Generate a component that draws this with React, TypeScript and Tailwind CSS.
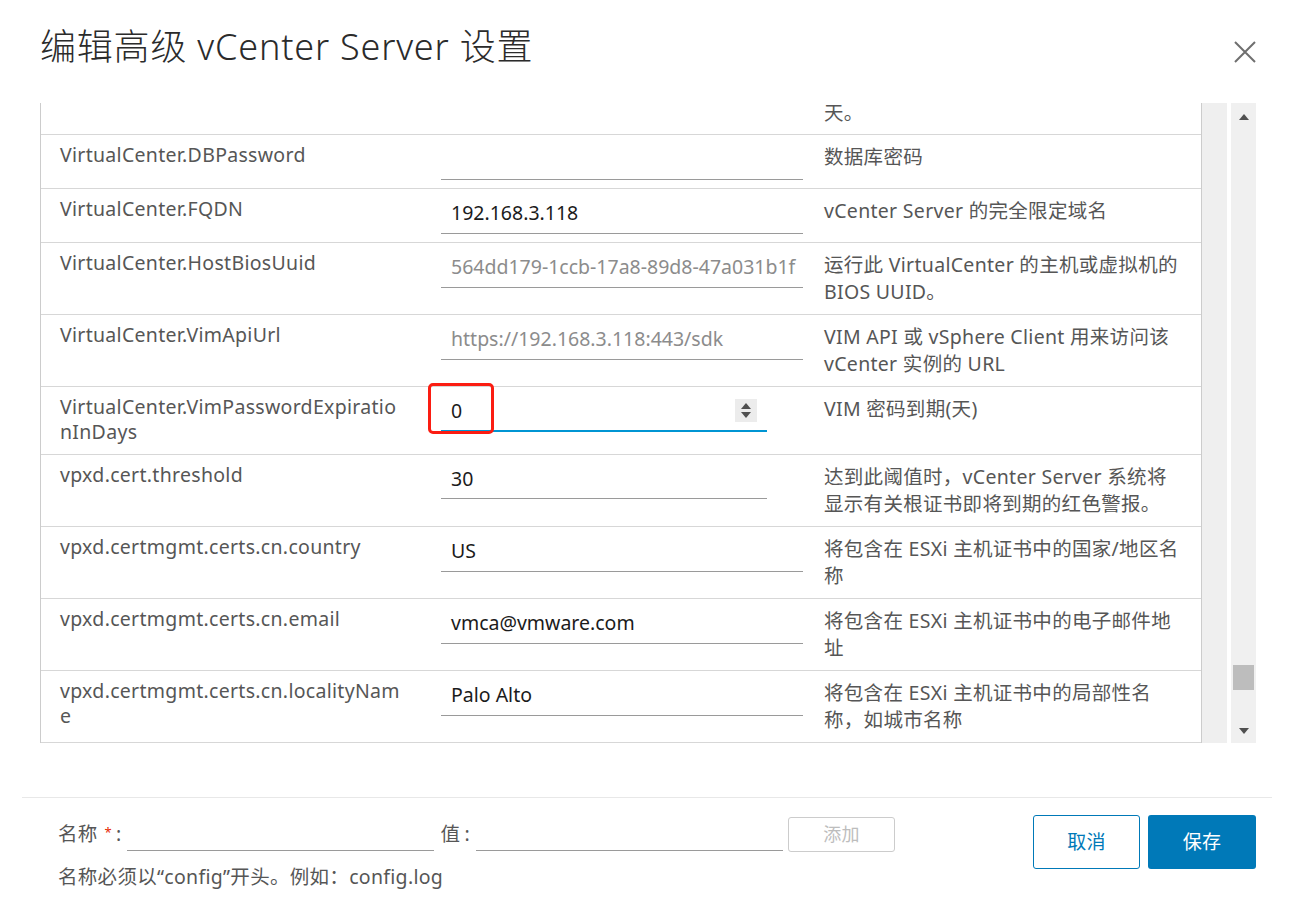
import React from "react";

type Row = {
  h: number;
  name: string[];
  value?: string;
  kind?: "text" | "muted" | "number" | "numberFocus";
  desc: string[];
};

const rows: Row[] = [
  { h: 54, name: ["VirtualCenter.DBPassword"], value: "", kind: "text", desc: ["数据库密码"] },
  { h: 54, name: ["VirtualCenter.FQDN"], value: "192.168.3.118", kind: "text", desc: ["vCenter Server 的完全限定域名"] },
  {
    h: 72,
    name: ["VirtualCenter.HostBiosUuid"],
    value: "564dd179-1ccb-17a8-89d8-47a031b1f",
    kind: "muted",
    desc: ["运行此 VirtualCenter 的主机或虚拟机的", "BIOS UUID。"],
  },
  {
    h: 72,
    name: ["VirtualCenter.VimApiUrl"],
    value: "https://192.168.3.118:443/sdk",
    kind: "muted",
    desc: ["VIM API 或 vSphere Client 用来访问该", "vCenter 实例的 URL"],
  },
  {
    h: 68,
    name: ["VirtualCenter.VimPasswordExpiratio", "nInDays"],
    value: "0",
    kind: "numberFocus",
    desc: ["VIM 密码到期(天)"],
  },
  {
    h: 72,
    name: ["vpxd.cert.threshold"],
    value: "30",
    kind: "number",
    desc: ["达到此阈值时，vCenter Server 系统将", "显示有关根证书即将到期的红色警报。"],
  },
  {
    h: 72,
    name: ["vpxd.certmgmt.certs.cn.country"],
    value: "US",
    kind: "text",
    desc: ["将包含在 ESXi 主机证书中的国家/地区名", "称"],
  },
  {
    h: 72,
    name: ["vpxd.certmgmt.certs.cn.email"],
    value: "vmca@vmware.com",
    kind: "text",
    desc: ["将包含在 ESXi 主机证书中的电子邮件地", "址"],
  },
  {
    h: 72,
    name: ["vpxd.certmgmt.certs.cn.localityNam", "e"],
    value: "Palo Alto",
    kind: "text",
    desc: ["将包含在 ESXi 主机证书中的局部性名", "称，如城市名称"],
  },
];

const rowH: Record<number, string> = {
  54: "h-[54px]",
  68: "h-[68px]",
  72: "h-[72px]",
};

function Spinner() {
  return (
    <div className="w-[22px] h-[23px] bg-[#ececec] flex flex-col items-center justify-center gap-[3px]">
      <svg width="10" height="6" viewBox="0 0 10 6">
        <path d="M5 0 L10 6 L0 6 Z" fill="#505050" />
      </svg>
      <svg width="10" height="6" viewBox="0 0 10 6">
        <path d="M0 0 L10 0 L5 6 Z" fill="#505050" />
      </svg>
    </div>
  );
}

function ValueCell({ row }: { row: Row }) {
  if (row.kind === "number" || row.kind === "numberFocus") {
    const focus = row.kind === "numberFocus";
    return (
      <div className="relative w-[362px] pt-[9px]">
        <div
          className={
            focus
              ? "w-[326px] h-[36px] border-b-2 border-[#0095d3] flex items-start justify-between pl-[10px] pr-[10px]"
              : "w-[326px] h-[35px] border-b border-[#9a9a9a] flex items-start pl-[10px]"
          }
        >
          <span className="leading-[30px] tracking-normal text-[#1b1b1b]">{row.value}</span>
          {focus && (
            <div className="mt-[3px]">
              <Spinner />
            </div>
          )}
        </div>
        {focus && (
          <div className="absolute top-[-4px] left-[-13px] w-[66px] h-[51px] border-[3px] border-[#fb1d12] rounded-[5px]" />
        )}
      </div>
    );
  }
  return (
    <div className="w-[362px] pt-[9px]">
      <div className="h-[36px] border-b border-[#9a9a9a] pl-[10px] whitespace-nowrap overflow-hidden">
        <span
          className={
            row.kind === "muted"
              ? "leading-[30px] tracking-normal text-[#8c8c8c]"
              : "leading-[30px] tracking-normal text-[#1b1b1b]"
          }
        >
          {row.value}
        </span>
      </div>
    </div>
  );
}

export default function App() {
  return (
    <div
      className="w-[1291px] h-[904px] bg-white text-[19.5px] tracking-[0.3px] text-[#565656]"
      style={{ fontFamily: '"Noto Sans", "Noto Sans CJK SC", sans-serif' }}
    >
      {/* header */}
      <div className="h-[103px] flex items-start justify-between pl-[40px] pr-[35px] pt-[22px]">
        <h1 className="text-[36px] leading-[50px] font-light tracking-[0.8px] text-[#2b2b2b]">
          编辑高级 vCenter Server 设置
        </h1>
        <button className="mt-[19px] w-[22px] h-[22px] flex items-center justify-center">
          <svg width="22" height="22" viewBox="0 0 22 22">
            <path d="M1 1 L21 21 M21 1 L1 21" stroke="#6f6f6f" strokeWidth="2" />
          </svg>
        </button>
      </div>

      {/* grid body */}
      <div className="flex ml-[40px] h-[640px]">
        <div className="w-[1162px] h-[640px] overflow-hidden border-l border-r border-[#cccccc]">
          {/* list scrolled down: first row only partly visible */}
          <div className="h-[32px] flex border-b border-[#d7d7d7]">
            <div className="w-[400px]" />
            <div className="w-[362px]" />
            <div className="flex-1 pl-[21px] leading-[20px]">天。</div>
          </div>
          {rows.map((r, i) => (
            <div key={i} className={`${rowH[r.h]} flex border-b border-[#d7d7d7]`}>
              <div className="w-[400px] pl-[19px] pt-[7px] leading-[25px] whitespace-nowrap">
                {r.name.map((n, j) => (
                  <div key={j}>{n}</div>
                ))}
              </div>
              <ValueCell row={r} />
              <div className="flex-1 pl-[21px] pt-[8px] leading-[27px]">
                {r.desc.map((d, j) => (
                  <div key={j} className="whitespace-nowrap">
                    {d}
                  </div>
                ))}
              </div>
            </div>
          ))}
        </div>
        <div className="w-[25px] h-[640px] bg-[#efefef]" />
        <div className="w-[4px]" />
        <div className="w-[25px] h-[640px] bg-[#f0f0f0] flex flex-col items-center justify-between pt-[11px] pb-[9px]">
          <svg width="10" height="6" viewBox="0 0 10 6">
            <path d="M5 0 L10 6 L0 6 Z" fill="#505050" />
          </svg>
          <div className="flex-1 w-full flex flex-col justify-end pb-[38px] px-[2px]">
            <div className="h-[25px] w-full bg-[#bdbdbd]" />
          </div>
          <svg width="10" height="6" viewBox="0 0 10 6">
            <path d="M0 0 L10 0 L5 6 Z" fill="#505050" />
          </svg>
        </div>
      </div>

      {/* footer */}
      <div className="ml-[22px] mr-[19px] mt-[54px] border-t border-[#e8e8e8] flex justify-between pl-[36px] pr-[16px] pt-[17px]">
        <div className="flex flex-col">
          <div className="flex items-center h-[34px] mt-[2px]">
            <span className="text-[#565656]">名称</span>
            <span className="text-[#e62700] text-[13px] ml-[7px] self-start mt-[6px]">*</span>
            <span className="ml-[4px] mr-[5px]">:</span>
            <div className="w-[307px] h-[34px] border-b border-[#9a9a9a]" />
            <span className="ml-[7px]">值</span>
            <span className="ml-[4px] mr-[6px]">:</span>
            <div className="w-[307px] h-[34px] border-b border-[#9a9a9a]" />
            <button className="ml-[5px] w-[107px] h-[35px] border border-[#cccccc] rounded-[3px] text-[#bdbdbd] text-[18px]">
              添加
            </button>
          </div>
          <div className="mt-[13px] leading-[26px] text-[#565656]">名称必须以“config”开头。例如：config.log</div>
        </div>
        <div className="flex gap-[8px]">
          <button className="w-[107px] h-[54px] border border-[#0079b8] rounded-[3px] text-[#0079b8] text-[19px] bg-white">
            取消
          </button>
          <button className="w-[108px] h-[54px] rounded-[3px] text-white text-[19px] bg-[#0079b8]">保存</button>
        </div>
      </div>
    </div>
  );
}
